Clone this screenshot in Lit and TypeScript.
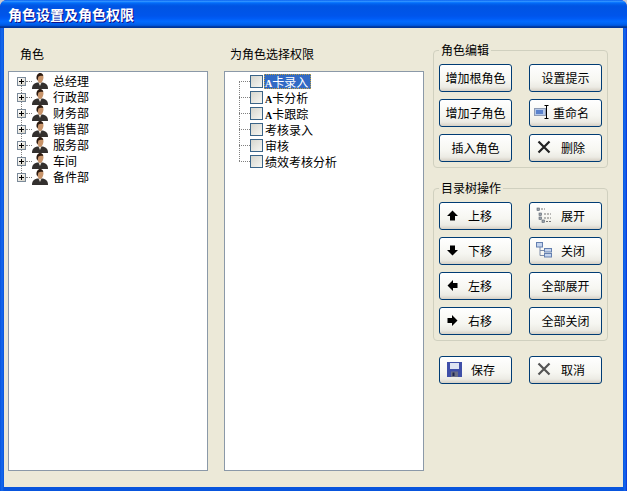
import { LitElement, html, css, svg } from "lit";
import { customElement } from "lit/decorators.js";

const person = svg`<svg width="16" height="16" viewBox="0 0 16 16"><path d="M0 16c0-4 2-6 5.500-6.500h5c3.500.5 5.500 2.500 5.500 6.500z" fill="#33302e"/><path d="M6.500 9.500 8 13l1.500-3.500z" fill="#e8e4dc"/><path d="M5 3.500C5 1.500 6.500.5 8 .5s3.500 1 3.500 3.500-1.500 6-3.500 6S5 6 5 3.500z" fill="#c8946a"/><path d="M4.600 6C4 2.500 6 0 8.200 0 10 0 11.400 1.500 11.200 3 9.500 2.500 7.500 3 6.500 3.500 6 4.500 6 6 5.600 7.500z" fill="#2b1a10"/></svg>`;
const xIcon = (c: string) => svg`<svg width="14" height="14" viewBox="0 0 14 14"><path d="M1.500 1.500 12.500 12.500M12.500 1.500 1.500 12.500" stroke="${c}" stroke-width="2.200" fill="none"/></svg>`;
const arrow = (rot: number) => svg`<svg width="13" height="13" viewBox="0 0 13 13"><path transform="rotate(${rot} 6.500 6.500)" d="M6.500 1.500 12 7H9V11.500H4V7H1z" fill="#000"/></svg>`;
const rename = svg`<svg width="16" height="16" viewBox="0 0 16 16"><rect x=".5" y="4.500" width="11" height="7" fill="#b4c8e8" stroke="#8f9cb4"/><rect x="2" y="6" width="7" height="4" fill="#5a82cc"/><path d="M10.500 1.500h4M12.500 1.500v13M10.500 14.500h4" stroke="#000" fill="none"/></svg>`;
const expand = svg`<svg width="16" height="16" viewBox="0 0 16 16"><g fill="#9aa3ad" stroke="#59616b" stroke-width=".6"><rect x="1" y="1" width="2.500" height="2.500"/><rect x="3" y="6" width="2.500" height="2.500"/><rect x="3" y="10" width="2.500" height="2.500"/><rect x="6" y="13" width="2.500" height="2.500"/></g><path d="M5 2h4M8 7h7M8 11h7M10 14.500h5" stroke="#777" stroke-dasharray="2 1" fill="none"/></svg>`;
const collapse = svg`<svg width="16" height="16" viewBox="0 0 16 16"><path d="M4 5v8.500h4M4 8.500h4" stroke="#7a8aa8" fill="none"/><g fill="#c4d4ee" stroke="#6480b0"><rect x=".5" y=".5" width="6" height="4.500"/><rect x="8.500" y="6.500" width="7" height="3.500"/><rect x="8.500" y="11.500" width="7" height="3.500"/></g></svg>`;
const floppy = svg`<svg width="15" height="15" viewBox="0 0 15 15"><rect width="15" height="15" fill="#3f4fa8"/><rect x="3" y="1" width="9" height="6" fill="#dfe4f2"/><rect x="4" y="9.500" width="7" height="5.500" fill="#6b6f86"/><rect x="5.500" y="10.500" width="2" height="3.500" fill="#1c2450"/></svg>`;

type Btn = { t: string; icon?: unknown; pad?: string };

@customElement("app-root")
export class AppRoot extends LitElement {
  static styles = css`
    :host { display: block; width: 627px; height: 491px; background: #c9c9cf; font: 12px "Noto Sans CJK SC", "Liberation Sans", sans-serif; color: #000; }
    .win { box-sizing: border-box; width: 627px; height: 491px; display: flex; flex-direction: column; border-radius: 7px 7px 0 0; overflow: hidden; background: #0831d9; }
    .title { flex: none; height: 28px; box-sizing: border-box; padding: 0 8px; display: flex; align-items: center; color: #fff; font-weight: 700; font-size: 14px; text-shadow: 1px 1px #0f1089;
      background: linear-gradient(180deg, #0058ee 0%, #3593ff 4%, #288eff 6%, #127dff 8%, #036ffc 10%, #0262ee 14%, #0057e5 20%, #0054e3 24%, #0055eb 56%, #005bf5 66%, #026afe 76%, #0062ef 86%, #0052d6 92%, #0040ab 94%, #003092 100%); }
    .frame { flex: 1; min-height: 0; box-sizing: border-box; padding: 0 4px 4px; background: linear-gradient(90deg, #0855dd 0, #166aee 2px, #0855dd 4px, #0855dd calc(100% - 4px), #166aee calc(100% - 2px), #0831d9 100%); display: flex; }
    .body { flex: 1; background: #ece9d8; display: flex; padding-left: 4px; }
    .col { width: 200px; display: flex; flex-direction: column; }
    .col + .col { margin-left: 16px; }
    .lab { height: 43px; box-sizing: border-box; padding-top: 17px; line-height: 18px; }
    .lab.a { padding-left: 12px; }
    .lab.b { padding-left: 6px; }
    .tree { box-sizing: border-box; width: 200px; height: 400px; background: #fff; border: 1px solid #8b99a8; padding-top: 1px; }
    .row { height: 16px; display: flex; align-items: center; position: relative; line-height: 16px; white-space: nowrap; }
    .a-row { padding-left: 8px; }
    .exp { flex: none; box-sizing: border-box; width: 9px; height: 9px; border: 1px solid #7b8a99; background: linear-gradient(135deg, #fff, #d8d4c8); position: relative; z-index: 1; }
    .exp::before { content: ""; position: absolute; left: 1px; right: 1px; top: 3px; height: 1px; background: #000; }
    .exp::after { content: ""; position: absolute; top: 1px; bottom: 1px; left: 3px; width: 1px; background: #000; }
    .dash { flex: none; width: 6px; border-top: 1px dotted #808080; }
    .ic { flex: none; display: flex; width: 16px; height: 16px; }
    .name { margin-left: 5px; padding-bottom: 1px; }
    .a-row:not(:last-child)::after { content: ""; position: absolute; left: 12px; top: 8px; height: 16px; border-left: 1px dotted #808080; }
    .b-row { padding-left: 14px; }
    .b-row:not(:last-child)::after { content: ""; position: absolute; left: 14px; top: 8px; height: 16px; border-left: 1px dotted #808080; }
    .b-row .dash { width: 11px; }
    .chk { flex: none; box-sizing: border-box; width: 13px; height: 13px; border: 1px solid #3a6488; background: linear-gradient(135deg, #d6d6ce, #f6f6f2); }
    .txt { margin-left: 1px; padding: 0 3px 0 1px; height: 15px; line-height: 15px; box-sizing: border-box; }
    .lat { font: 700 10px "Liberation Serif", serif; }
    .sel { background: #316ac5; color: #fff; outline: 1px dotted #c0a040; outline-offset: -1px; }
    .side { margin-left: 9px; width: 175px; padding-top: 15px; display: flex; flex-direction: column; }
    fieldset { margin: 0; padding: 6px 5px 0; border: 1px solid #d0d0bf; border-radius: 4px; min-width: 0; }
    fieldset + fieldset { margin-top: 13px; }
    legend { padding: 0 2px; margin-left: 0; line-height: 14px; height: 14px; }
    .grid { display: grid; grid-template-columns: 73px 73px; column-gap: 17px; grid-auto-rows: 28px; row-gap: 7px; }
    .g1 { padding-top: 7px; height: 125px; box-sizing: border-box; }
    .g2 { padding-top: 7px; height: 160px; box-sizing: border-box; }
    .bottom { padding: 0 6px; margin-top: 15px; }
    button { font: inherit; color: #000; padding: 0 0 2px; margin: 0; height: 28px; width: 73px; box-sizing: border-box; border: 1px solid #003c74; border-radius: 3px; background: linear-gradient(180deg, #fff 0%, #f6f6f1 60%, #ecebe4 85%, #d6d0c5 100%); display: flex; align-items: center; justify-content: center; position: relative; }
    .withicon { justify-content: flex-start; }
    .bi { flex: none; display: flex; align-items: center; justify-content: center; width: 16px; height: 16px; }
    .p1 { padding-left: 4px; } .p1 .bi { margin-right: 8px; }
    .p2 { padding-left: 6px; } .p2 .bi { margin-right: 9px; }
    .p3 { padding-left: 4px; } .p3 .bi { margin-right: 3px; }
    .p4 { padding-left: 6px; } .p4 .bi { margin-right: 9px; }
  `;

  btn(b: Btn) {
    return b.icon
      ? html`<button class="withicon ${b.pad}"><span class="bi">${b.icon}</span><span>${b.t}</span></button>`
      : html`<button>${b.t}</button>`;
  }

  render() {
    const roles = ["总经理", "行政部", "财务部", "销售部", "服务部", "车间", "备件部"];
    const perms = ["A卡录入", "A卡分析", "A卡跟踪", "考核录入", "审核", "绩效考核分析"];
    const g1: Btn[] = [
      { t: "增加根角色" }, { t: "设置提示" },
      { t: "增加子角色" }, { t: "重命名", icon: rename, pad: "p3" },
      { t: "插入角色" }, { t: "删除", icon: xIcon("#222"), pad: "p2" },
    ];
    const g2: Btn[] = [
      { t: "上移", icon: arrow(0), pad: "p1" }, { t: "展开", icon: expand, pad: "p2" },
      { t: "下移", icon: arrow(180), pad: "p1" }, { t: "关闭", icon: collapse, pad: "p2" },
      { t: "左移", icon: arrow(-90), pad: "p1" }, { t: "全部展开" },
      { t: "右移", icon: arrow(90), pad: "p1" }, { t: "全部关闭" },
    ];
    const g3: Btn[] = [
      { t: "保存", icon: floppy, pad: "p4" }, { t: "取消", icon: xIcon("#555"), pad: "p2" },
    ];
    return html`<div class="win">
      <div class="title">角色设置及角色权限</div>
      <div class="frame"><div class="body">
        <div class="col">
          <div class="lab a">角色</div>
          <div class="tree">
            ${roles.map((r) => html`<div class="row a-row"><span class="exp"></span><span class="dash"></span><span class="ic">${person}</span><span class="name">${r}</span></div>`)}
          </div>
        </div>
        <div class="col">
          <div class="lab b">为角色选择权限</div>
          <div class="tree">
            ${perms.map((p, i) => html`<div class="row b-row"><span class="dash"></span><span class="chk"></span><span class="txt ${i === 0 ? "sel" : ""}">${p.startsWith("A") ? html`<span class="lat">A</span>${p.slice(1)}` : p}</span></div>`)}
          </div>
        </div>
        <div class="side">
          <fieldset class="g1"><legend>角色编辑</legend><div class="grid">${g1.map((b) => this.btn(b))}</div></fieldset>
          <fieldset class="g2"><legend>目录树操作</legend><div class="grid">${g2.map((b) => this.btn(b))}</div></fieldset>
          <div class="grid bottom">${g3.map((b) => this.btn(b))}</div>
        </div>
      </div></div>
    </div>`;
  }
}
